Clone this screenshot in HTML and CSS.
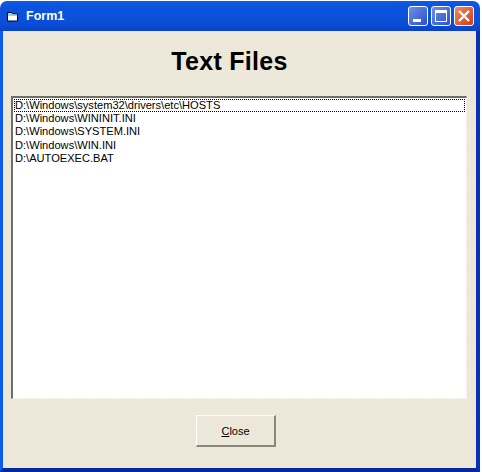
FILE: index.html

```html
<!DOCTYPE html>
<html lang="en">
<head>
    <meta charset="UTF-8">
    <title>Form1</title>
    <link rel="stylesheet" href="styles.css">
</head>
<body>
    <div class="window">
        <div class="titlebar">
            <svg class="app-icon" width="11" height="11" viewBox="0 0 11 11">
                <path d="M.5 1.5h4l1 1.5h5v7h-10z" fill="#fff" stroke="#000" stroke-width="1"/>
                <path d="M1 2h3.3l1 1.5H10V5H1z" fill="#7fe0e8"/>
            </svg>
            <span class="title">Form1</span>
            <div class="controls">
                <div class="ctl ctl-blue"><span class="min-glyph"></span></div>
                <div class="ctl ctl-blue"><span class="max-glyph"></span></div>
                <div class="ctl ctl-red">
                    <svg width="14" height="14" viewBox="0 0 14 14">
                        <path d="M2 2l10 10M12 2L2 12" stroke="#fff" stroke-width="2.4" fill="none"/>
                    </svg>
                </div>
            </div>
        </div>
        <div class="client">
            <h1>Text Files</h1>
            <div class="listbox">
                <div class="item item-focus">D:\Windows\system32\drivers\etc\HOSTS</div>
                <div class="item">D:\Windows\WININIT.INI</div>
                <div class="item">D:\Windows\SYSTEM.INI</div>
                <div class="item">D:\Windows\WIN.INI</div>
                <div class="item">D:\AUTOEXEC.BAT</div>
            </div>
            <div class="footer">
                <button class="close-btn"><u>C</u>lose</button>
            </div>
        </div>
    </div>
</body>
</html>
```

FILE: styles.css

```css
body {
    margin: 0;
    padding: 0;
    background-color: #fff;
    font-family: "Liberation Sans", Arial, sans-serif;
}

.window {
    width: 480px;
    height: 471px;
    margin-top: 1px;
    display: flex;
    flex-direction: column;
    border-radius: 7px 7px 0 0;
    overflow: hidden;
}

.titlebar {
    height: 30px;
    flex: none;
    display: flex;
    align-items: center;
    padding: 0 6px 0 7px;
    background: linear-gradient(#0a5ae8 0, #0b52dc 8px, #0a4fd8 22px, #0a42c8 30px);
}

.app-icon {
    flex: none;
}

.title {
    margin-left: 8px;
    color: #fff;
    font-size: 12.5px;
    font-weight: bold;
}

.controls {
    margin-left: auto;
    display: flex;
    gap: 3px;
}

.ctl {
    width: 18px;
    height: 18px;
    border: 1px solid #fff;
    border-radius: 3px;
    display: flex;
    align-items: center;
    justify-content: center;
    position: relative;
}

.ctl-blue {
    background: linear-gradient(135deg, #6f8fe8, #2a50d0);
}

.ctl-red {
    background: linear-gradient(135deg, #ec8a68, #d23c14);
}

.min-glyph {
    position: absolute;
    left: 4px;
    bottom: 3px;
    width: 8px;
    height: 3px;
    background-color: #fff;
}

.max-glyph {
    width: 10px;
    height: 8px;
    border: 1px solid #fff;
    border-top-width: 3px;
}

.client {
    flex: 1;
    padding: 0 9px 0 8px;
    display: flex;
    flex-direction: column;
    border-left: 3px solid #0c5cf0;
    border-right: 4px solid #0632b4;
    border-bottom: 4px solid #0428a0;
    /* stripes at 2px and 3px, to get the dither of the 256 colour capture */
    background:
        linear-gradient(90deg, rgba(255, 205, 215, 0.12) 33%, rgba(200, 255, 190, 0.14) 33%, rgba(200, 255, 190, 0.14) 66%, rgba(215, 235, 255, 0.1) 66%) 0 0 / 3px 3px,
        linear-gradient(rgba(255, 255, 200, 0.14) 50%, rgba(255, 225, 235, 0.1) 50%) 0 0 / 2px 2px,
        #ebe8d6;
}

h1 {
    margin: 0;
    height: 65px;
    padding-right: 19px;
    line-height: 60px;
    text-align: center;
    font-size: 25px;
    letter-spacing: 0.3px;
    font-weight: bold;
    color: #000;
}

.listbox {
    height: 298px;
    flex: none;
    padding: 1px;
    background-color: #fff;
    border-top: 2px solid #716f64;
    border-left: 2px solid #716f64;
    border-right: 1px solid #f4f2e8;
    border-bottom: 1px solid #f4f2e8;
}

.item {
    height: 13.2px;
    line-height: 13px;
    padding-left: 1px;
    font-size: 11.1px;
    color: #000;
    white-space: nowrap;
}

.item-focus {
    outline: 1px dotted #000;
    outline-offset: -1px;
}

.footer {
    display: flex;
    justify-content: center;
    padding-top: 16px;
    padding-right: 6px;
}

.close-btn {
    width: 80px;
    height: 32px;
    padding: 0;
    font-family: inherit;
    font-size: 11px;
    color: #000;
    background: transparent;
    border-top: 1px solid #fff;
    border-left: 1px solid #fff;
    border-right: 2px solid #8a887c;
    border-bottom: 2px solid #8a887c;
}
```
